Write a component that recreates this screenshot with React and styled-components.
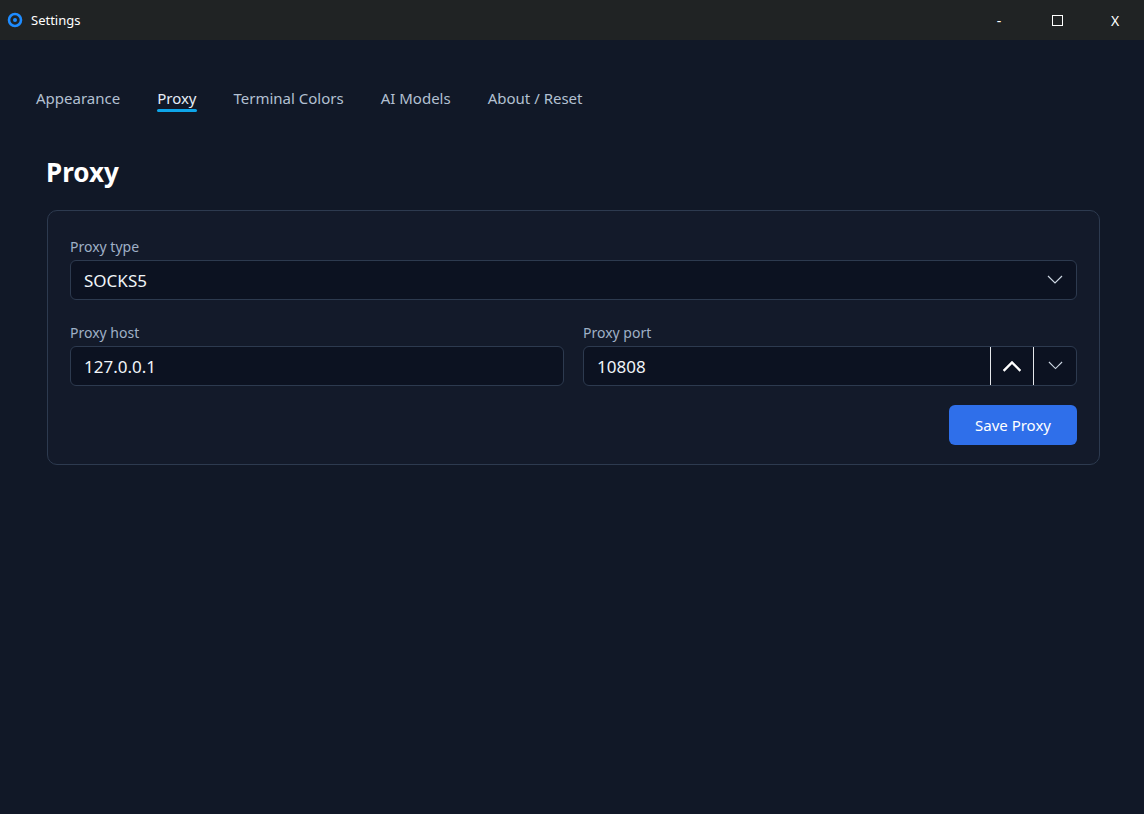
import React from "react";
import styled, { createGlobalStyle } from "styled-components";

const G = createGlobalStyle`
  html,body{margin:0;padding:0;background:#111827;font-family:"Noto Sans","Open Sans",sans-serif;}
  *{box-sizing:border-box;}
`;
const Window = styled.div`width:1144px;height:814px;background:#111827;display:flex;flex-direction:column;`;
const TitleBar = styled.div`height:40px;background:#202324;display:flex;align-items:center;color:#fff;font-size:13px;`;
const TitleLeft = styled.div`display:flex;align-items:center;gap:8px;padding-left:7px;flex:1;`;
const WinBtn = styled.div`width:58px;height:40px;display:flex;align-items:center;justify-content:center;color:#fff;font-size:14px;`;
const Max = styled.div`width:11px;height:11px;border:1px solid #fff;`;
const Tabs = styled.div`display:flex;gap:37px;padding:48px 0 0 36px;`;
const Tab = styled.div`color:${p=>p.$a?"#e5edf7":"#b3c0d2"};font-size:15px;position:relative;padding-bottom:4px;
  ${p=>p.$a&&`&:after{content:"";position:absolute;left:0;right:0;bottom:0;height:3px;border-radius:2px;background:#0ea5e9;}`}`;
const Main = styled.div`padding:0 44px 0 47px;`;
const H1 = styled.h1`margin:45px 0 23px -1px;color:#fff;font-size:26px;font-weight:700;line-height:30px;`;
const Card = styled.div`border:1px solid #2d3a4f;border-radius:10px;background:#131a2a;padding:26px 22px 19px;display:flex;flex-direction:column;`;
const Label = styled.div`color:#9fb0c6;font-size:14px;line-height:20px;margin-bottom:3px;`;
const Field = styled.div`display:flex;flex-direction:column;flex:1;`;
const Row = styled.div`display:flex;gap:19px;margin-top:${p=>p.$mt||0}px;`;
const Box = styled.div`height:40px;border:1px solid #2d3a4f;border-radius:6px;background:#0c1221;color:#f1f5f9;font-size:17px;display:flex;align-items:center;padding-left:13px;overflow:hidden;`;
const Grow = styled.span`flex:1;`;
const Spin = styled.div`width:43px;height:40px;display:flex;align-items:center;justify-content:center;border-left:1px solid ${p=>p.$w?"#e5e7eb":"#2d3a4f"};`;
const Actions = styled.div`display:flex;justify-content:flex-end;margin-top:19px;`;
const Btn = styled.button`width:128px;height:40px;border:0;border-radius:6px;background:#2f6fea;color:#fff;font:15px "Noto Sans",sans-serif;`;

const Chev = ({up,w=1.2,c="#cbd5e1",s=16})=>(<svg width={s} height={s/2+2} viewBox="0 0 16 10"><path d={up?"M1 9L8 2l7 7":"M1 1l7 7 7-7"} fill="none" stroke={c} strokeWidth={w}/></svg>);

export default function App(){
  return <Window><G/>
    <TitleBar>
      <TitleLeft>
        <svg width="16" height="16" viewBox="0 0 16 16"><circle cx="8" cy="8" r="6" fill="none" stroke="#1e8cff" strokeWidth="2.6"/><circle cx="8" cy="8" r="2" fill="#1e8cff"/></svg>
        Settings
      </TitleLeft>
      <WinBtn>-</WinBtn><WinBtn><Max/></WinBtn><WinBtn>X</WinBtn>
    </TitleBar>
    <Tabs>
      <Tab>Appearance</Tab><Tab $a>Proxy</Tab><Tab>Terminal Colors</Tab><Tab>AI Models</Tab><Tab>About / Reset</Tab>
    </Tabs>
    <Main>
      <H1>Proxy</H1>
      <Card>
        <Field><Label>Proxy type</Label>
          <Box><Grow>SOCKS5</Grow><Spin style={{borderLeft:0}}><Chev/></Spin></Box>
        </Field>
        <Row $mt={23}>
          <Field><Label>Proxy host</Label><Box>127.0.0.1</Box></Field>
          <Field><Label>Proxy port</Label>
            <Box><Grow>10808</Grow><Spin $w><Chev up w={2} c="#fff" s={20}/></Spin><Spin $w><Chev s={15}/></Spin></Box>
          </Field>
        </Row>
        <Actions><Btn>Save Proxy</Btn></Actions>
      </Card>
    </Main>
  </Window>;
}
